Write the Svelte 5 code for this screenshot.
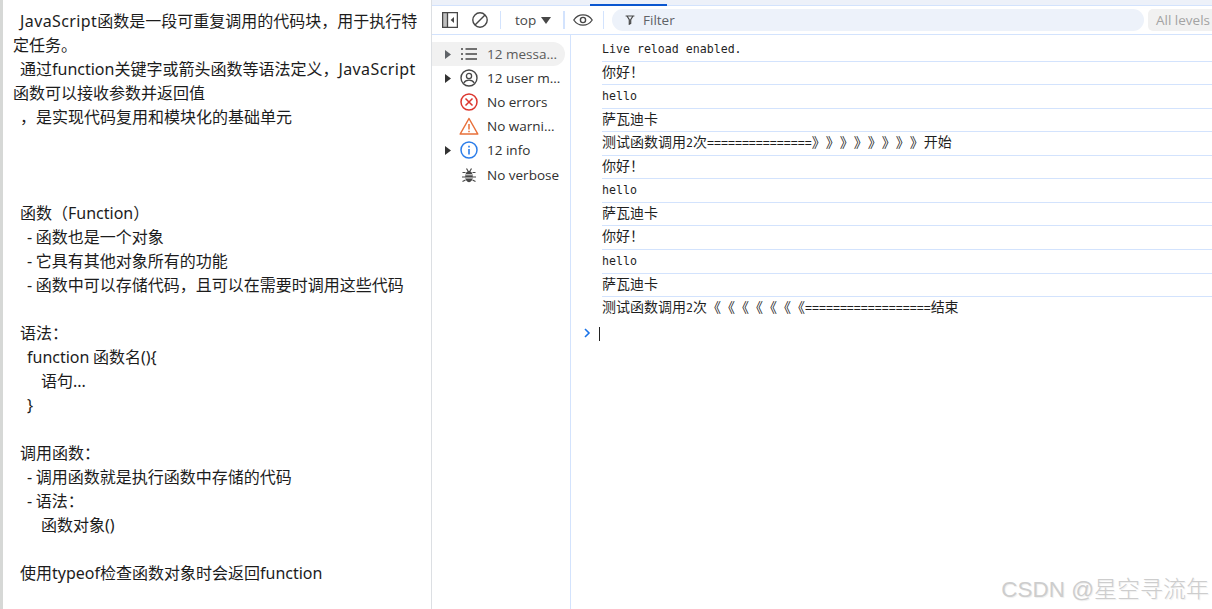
<script>
  const noteLines = [
    '  JavaScript函数是一段可重复调用的代码块，用于执行特',
    '定任务。',
    '  通过function关键字或箭头函数等语法定义，JavaScript',
    '函数可以接收参数并返回值',
    '  ，是实现代码复用和模块化的基础单元',
    '', '', '',
    '  函数（Function）',
    '    - 函数也是一个对象',
    '    - 它具有其他对象所有的功能',
    '    - 函数中可以存储代码，且可以在需要时调用这些代码',
    '',
    '  语法：',
    '    function 函数名(){',
    '        语句...',
    '    }',
    '',
    '  调用函数：',
    '    - 调用函数就是执行函数中存储的代码',
    '    - 语法：',
    '        函数对象()',
    '',
    '  使用typeof检查函数对象时会返回function'
  ];

  const filters = [
    { id: 'list', label: '12 messa...', arrow: 'dim', active: true },
    { id: 'user', label: '12 user m...', arrow: 'dark' },
    { id: 'error', label: 'No errors' },
    { id: 'warn', label: 'No warni...' },
    { id: 'info', label: '12 info', arrow: 'dark' },
    { id: 'bug', label: 'No verbose' }
  ];

  const messages = [
    'Live reload enabled.',
    '你好！',
    'hello',
    '萨瓦迪卡',
    '测试函数调用2次===============》》》》》》》》开始',
    '你好！',
    'hello',
    '萨瓦迪卡',
    '你好！',
    'hello',
    '萨瓦迪卡',
    '测试函数调用2次《《《《《《《==================结束'
  ];

  // latin and han runs need different sizes to land on a 7px / 14px grid
  const runs = (text) =>
    text.split(/([\u3000-\u9fff\uff00-\uffef]+)/).filter(Boolean).map((t) => ({
      t,
      han: /[\u3000-\u9fff\uff00-\uffef]/.test(t)
    }));

  const noteParts = (line) => line.split(/(JavaScript)/).filter(Boolean);
</script>

<div class="page">
  <section class="note">
    {#each noteLines as line}
      <p>{#if line}{#each noteParts(line) as part}<span class:js={part === 'JavaScript'}>{part}</span>{/each}{:else}&nbsp;{/if}</p>
    {/each}
  </section>

  <section class="devtools">
    <div class="tabstrip"><span class="tab-mark"></span></div>

    <div class="toolbar">
      <svg class="tool" viewBox="0 0 16 16" width="16" height="16">
        <path d="M.6.6h14.8v14.8H.6zM5.500.6v14.800" fill="none" stroke="#474747" stroke-width="1.3" />
        <path d="M1 1h4.500v14H1z" fill="#474747" opacity=".35" />
        <path d="M12 5v6L8.600 8z" fill="#474747" />
      </svg>
      <svg class="tool gap-a" viewBox="0 0 16 16" width="16" height="16">
        <circle cx="8" cy="8" r="7.200" fill="none" stroke="#474747" stroke-width="1.4" />
        <path d="M13 3 3 13" stroke="#474747" stroke-width="1.4" />
      </svg>
      <span class="sep sep-a"></span>
      <span class="context">top</span>
      <svg class="caret-down" viewBox="0 0 10 7" width="10" height="7"><path d="M0 0h10L5 7z" fill="#474747" /></svg>
      <span class="sep sep-b"></span>
      <svg class="eye" viewBox="0 0 20 12" width="20" height="12">
        <path d="M.8 6C3 2.600 6.200.8 10 .8s7 1.800 9.200 5.200C17 9.400 13.800 11.200 10 11.200S3 9.400.8 6z" fill="none" stroke="#474747" stroke-width="1.3" />
        <circle cx="10" cy="6" r="2.600" fill="none" stroke="#474747" stroke-width="1.4" />
      </svg>
      <span class="sep sep-c"></span>
      <div class="filter">
        <svg viewBox="0 0 10 10" width="10" height="10">
          <path d="M.6 1h8.800M2 1l2.300 3.600v4.600l1.400-.8V4.600L8 1" fill="none" stroke="#474747" stroke-width="1.2" />
        </svg>
        <span>Filter</span>
      </div>
      <div class="levels">All levels</div>
    </div>

    <div class="body">
      <aside class="sidebar">
        {#each filters as f}
          <div class="item" class:active={f.active}>
            <span class="arrow">
              {#if f.arrow}
                <svg viewBox="0 0 6 9" width="6" height="9"><path d="M0 0l6 4.500L0 9z" fill={f.arrow === 'dim' ? '#5f6368' : '#333'} /></svg>
              {/if}
            </span>
            <span class="icon">
              {#if f.id === 'list'}
                <svg viewBox="0 0 16 12" width="16" height="12">
                  <path d="M0 1h2M0 6h2M0 11h2M4.500 1H16M4.500 6H16M4.500 11H16" stroke="#474747" stroke-width="1.4" fill="none" />
                </svg>
              {:else if f.id === 'user'}
                <svg viewBox="0 0 18 18" width="18" height="18">
                  <circle cx="9" cy="9" r="8" fill="none" stroke="#474747" stroke-width="1.4" />
                  <circle cx="9" cy="7" r="2.600" fill="none" stroke="#474747" stroke-width="1.3" />
                  <path d="M3.800 14c1-2 3-2.900 5.200-2.900s4.200.9 5.200 2.900" fill="none" stroke="#474747" stroke-width="1.3" />
                </svg>
              {:else if f.id === 'error'}
                <svg viewBox="0 0 18 18" width="18" height="18">
                  <circle cx="9" cy="9" r="8" fill="none" stroke="#dc362e" stroke-width="1.5" />
                  <path d="M5.500 5.500l7 7M12.500 5.500l-7 7" stroke="#dc362e" stroke-width="1.5" />
                </svg>
              {:else if f.id === 'warn'}
                <svg viewBox="0 0 20 18" width="20" height="18">
                  <path d="M10 1.500 1.200 17h17.600z" fill="none" stroke="#e8703a" stroke-width="1.5" stroke-linejoin="round" />
                  <path d="M10 7v5.500M10 13.800v1.500" stroke="#e8703a" stroke-width="1.5" />
                </svg>
              {:else if f.id === 'info'}
                <svg viewBox="0 0 18 18" width="18" height="18">
                  <circle cx="9" cy="9" r="8" fill="none" stroke="#2b7de9" stroke-width="1.5" />
                  <path d="M9 8v5.500M9 4.800v1.600" stroke="#2b7de9" stroke-width="1.6" />
                </svg>
              {:else}
                <svg viewBox="0 0 16 16" width="16" height="16">
                  <ellipse cx="8" cy="9.500" rx="3.800" ry="5.700" fill="#474747" />
                  <path d="M5.500 1.500 7 4M10.500 1.500 9 4M1.500 5.500h3M11.500 5.500h3M1 10h3.500M11.500 10h3.500M1.500 14.500l3-1.500M14.500 14.500l-3-1.500" stroke="#474747" stroke-width="1.2" fill="none" />
                  <path d="M4.500 7.800h7M4.500 11h7" stroke="#fff" stroke-width=".9" />
                </svg>
              {/if}
            </span>
            <span class="label">{f.label}</span>
          </div>
        {/each}
      </aside>

      <main class="console">
        <div class="log">
          {#each messages as m}
            <div class="row">
              {#each runs(m) as r}<span class:han={r.han}>{r.t}</span>{/each}
            </div>
          {/each}
        </div>
        <div class="prompt">
          <svg viewBox="0 0 7 10" width="7" height="10"><path d="M1 1l4 4-4 4" fill="none" stroke="#1a73e8" stroke-width="1.6" /></svg>
          <span class="cursor"></span>
        </div>
      </main>
    </div>
  </section>

  <div class="watermark">CSDN @<span>星空寻流年</span></div>
</div>

<style>
  :global(body) {
    margin: 0;
    background: #fff;
  }

  .page {
    display: flex;
    position: relative;
    width: 1212px;
    height: 609px;
    overflow: hidden;
  }

  .note {
    box-sizing: border-box;
    width: 432px;
    flex: none;
    padding: 9px 0 0 10px;
    border-left: 3px solid #d6d8d6;
    border-right: 1px solid #dcdfe3;
    font-family: "Noto Sans", "Noto Sans CJK SC", sans-serif;
    font-size: 16px;
    line-height: 24px;
    color: #1c1c1c;
    word-spacing: -0.66px;
  }

  .note p {
    margin: 0;
    white-space: pre;
  }

  .js {
    letter-spacing: 0.4px;
  }

  .devtools {
    flex: 1;
    min-width: 0;
    display: flex;
    flex-direction: column;
    font-family: "Open Sans", "Noto Sans", sans-serif;
  }

  .tabstrip {
    box-sizing: border-box;
    height: 6px;
    flex: none;
    background: #edf1f9;
    border-bottom: 1px solid #d3e3fd;
    position: relative;
  }

  .tab-mark {
    position: absolute;
    left: 158px;
    top: 4px;
    width: 77px;
    height: 2px;
    background: #0b57d0;
  }

  .toolbar {
    box-sizing: border-box;
    height: 29px;
    flex: none;
    display: flex;
    align-items: center;
    padding-left: 10px;
    border-bottom: 1px solid #d3e3fd;
    font-size: 13.5px;
    color: #474747;
  }

  .tool {
    flex: none;
  }

  .gap-a {
    margin-left: 14px;
  }

  .sep {
    flex: none;
    width: 1px;
    height: 18px;
    background: #d3e3fd;
  }

  .sep-a {
    margin-left: 12px;
  }

  .context {
    flex: none;
    margin-left: 14px;
    width: 26px;
  }

  .caret-down {
    flex: none;
  }

  .sep-b {
    width: 2px;
    margin-left: 12px;
  }

  .eye {
    flex: none;
    margin-left: 8px;
  }

  .sep-c {
    margin-left: 10px;
  }

  .filter {
    box-sizing: border-box;
    width: 532px;
    height: 22px;
    margin-left: 8px;
    flex: none;
    display: flex;
    align-items: center;
    gap: 8px;
    padding-left: 13px;
    border-radius: 11px;
    background: #edf2fa;
    color: #5f6368;
  }

  .levels {
    flex: none;
    width: 80px;
    height: 22px;
    margin-left: 4px;
    padding-left: 8px;
    line-height: 22px;
    border-radius: 5px 0 0 5px;
    background: #f1f1f1;
    color: #a3a3a3;
    white-space: nowrap;
  }

  .body {
    flex: 1;
    min-height: 0;
    display: flex;
  }

  .sidebar {
    box-sizing: border-box;
    width: 139px;
    flex: none;
    padding-top: 7px;
    border-right: 1px solid #d3e3fd;
  }

  .item {
    display: flex;
    align-items: center;
    width: 133px;
    height: 24.1px;
    border-radius: 0 12px 12px 0;
    font-size: 13.5px;
    color: #303030;
    white-space: nowrap;
  }

  .item.active {
    background: #f1f1f1;
    color: #5a5a5a;
  }

  .arrow {
    width: 13px;
    margin-left: 13px;
    display: flex;
  }

  .icon {
    width: 20px;
    margin-left: 1px;
    margin-right: 8px;
    display: flex;
    justify-content: center;
  }

  .console {
    flex: 1;
    min-width: 0;
    padding-top: 3px;
    font-family: "DejaVu Sans Mono", "Liberation Mono", monospace;
    font-size: 11.6px;
    color: #1f1f1f;
  }

  .log {
    margin-left: 31px;
  }

  .row {
    box-sizing: border-box;
    height: 23.55px;
    padding-top: 1px;
    line-height: 20px;
    border-bottom: 1px solid #d3e3fd;
    white-space: pre;
  }

  .row:first-child {
    height: 23.6px;
  }

  .row:last-child {
    border-bottom: 0;
  }

  .han {
    font-family: "Noto Sans CJK SC", sans-serif;
    font-size: 14px;
    line-height: 0;
    text-spacing-trim: space-all;
    font-kerning: none;
  }

  .prompt {
    display: flex;
    align-items: center;
    height: 15px;
    margin: 5px 0 0 13px;
    gap: 8px;
  }

  .cursor {
    width: 1px;
    height: 14px;
    margin-top: 2px;
    background: #222;
  }

  .watermark {
    position: absolute;
    right: 3px;
    bottom: 6px;
    font-family: "Liberation Sans", "Noto Sans CJK SC", sans-serif;
    font-size: 22.5px;
    line-height: 26px;
    color: #cdcdcd;
    text-shadow: 1px 1px 1px #eee;
    white-space: nowrap;
  }

  .watermark span {
    font-size: 23px;
    font-weight: 300;
  }
</style>
